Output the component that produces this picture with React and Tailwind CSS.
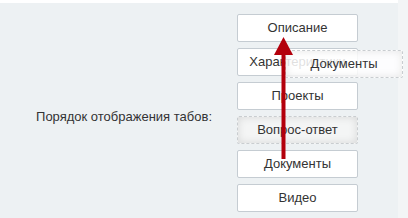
import React from "react";

const tabs = ["Описание", "Характеристики", "Проекты", "Вопрос-ответ", "Документы", "Видео"];

export default function App() {
  return (
    <div className="w-[408px] h-[218px] flex bg-[#edf1f3] font-['Liberation_Sans',Arial,sans-serif] text-[#333] overflow-hidden">
      <div className="w-[398px] border-t-[3px] border-white relative">
        <div className="flex items-center pt-[11px]">
          <div className="w-[237px] pr-[25px] text-right text-[13px] pt-[7px]">
            Порядок отображения табов:
          </div>
          <div className="flex flex-col gap-[6px] w-[121px]">
            {tabs.map((t) =>
              t === "Вопрос-ответ" ? (
                <div
                  key={t}
                  className="h-[28px] flex items-center justify-center text-[13px] border border-dashed border-[#c9cdd0] rounded-[2px] bg-[#f4f5f5] shadow-[inset_0_0_8px_rgba(0,0,0,0.12)]"
                >
                  {t}
                </div>
              ) : (
                <div
                  key={t}
                  className="h-[28px] flex items-center justify-center text-[13px] bg-white border border-[#c5ccd2] rounded-[2px]"
                >
                  {t}
                </div>
              )
            )}
          </div>
        </div>

        {/* dragged ghost */}
        <div className="absolute left-[285px] top-[47px] w-[118px] h-[28px] flex items-center justify-center text-[13px] border border-dashed border-[#c9cdd0] rounded-[2px] bg-white/85 shadow-[inset_0_0_8px_rgba(0,0,0,0.1)]">
          Документы
        </div>

        {/* arrow */}
        <svg className="absolute left-0 top-0" width="398" height="218" viewBox="0 0 398 218">
          <rect x="281.5" y="48" width="4" height="108" fill="#b3000c" />
          <polygon points="283.5,34 274,52 293,52" fill="#b3000c" />
        </svg>
      </div>
      <div className="flex-1 bg-[#f3f5f6]" />
    </div>
  );
}
